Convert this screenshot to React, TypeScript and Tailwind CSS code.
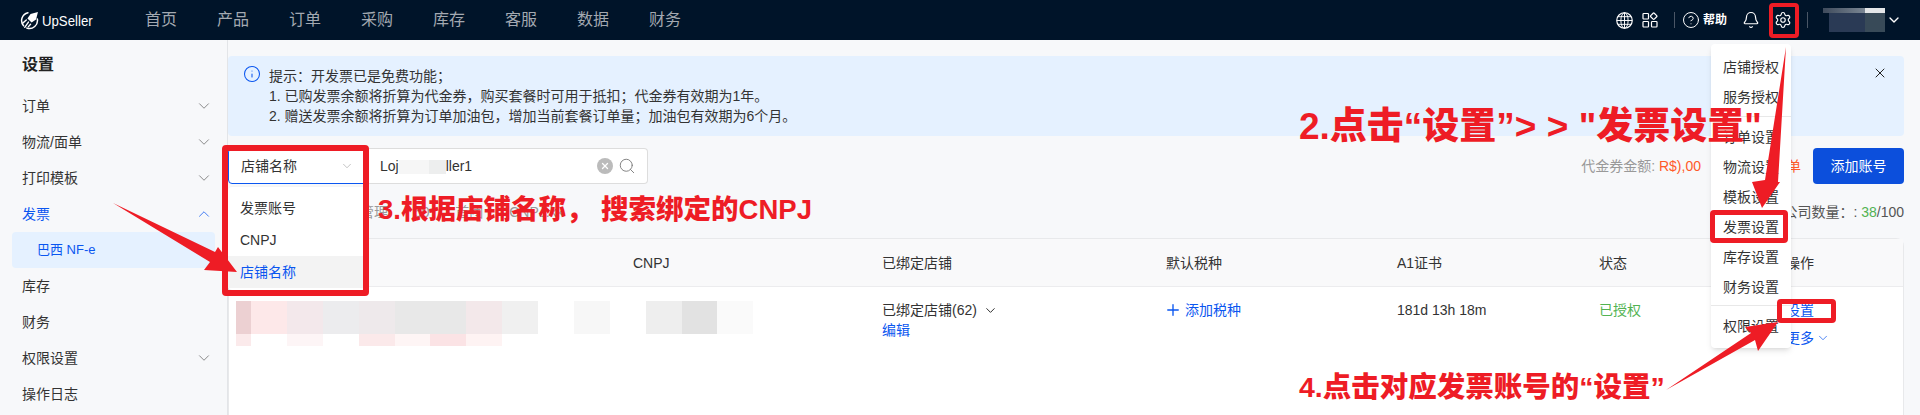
import { Bell, ChevronDown, ChevronUp, CircleHelp, Info, Plus, Search, Settings, X } from 'lucide-react'

const navItems = ['首页', '产品', '订单', '采购', '库存', '客服', '数据', '财务']

const sideItems = [
  { label: '订单', arrow: true },
  { label: '物流/面单', arrow: true },
  { label: '打印模板', arrow: true },
  { label: '发票', open: true },
  { label: '巴西 NF-e', sub: true },
  { label: '库存' },
  { label: '财务' },
  { label: '权限设置', arrow: true },
  { label: '操作日志' },
]

const mosaicTop = [
  ['w-[15px]', 'bg-[#ecd0d2]'],
  ['w-[36px]', 'bg-[#fde8e9]'],
  ['w-[36px]', 'bg-[#f3e8eb]'],
  ['w-[36px]', 'bg-[#ececee]'],
  ['w-[36px]', 'bg-[#eee9eb]'],
  ['w-[35px]', 'bg-[#e8e8e8]'],
  ['w-[36px]', 'bg-[#e8e8e8]'],
  ['w-[36px]', 'bg-[#f3e8ea]'],
  ['w-[36px]', 'bg-[#f0f0f0]'],
  ['w-[36px]', 'bg-white'],
  ['w-[36px]', 'bg-[#f7f7f7]'],
]

const mosaicBottom = [
  ['w-[15px]', 'bg-[#fbeaeb]'],
  ['w-[36px]', 'bg-white'],
  ['w-[36px]', 'bg-[#fdf5f6]'],
  ['w-[36px]', 'bg-white'],
  ['w-[36px]', 'bg-[#fbe9ea]'],
  ['w-[35px]', 'bg-[#fef5f5]'],
  ['w-[36px]', 'bg-[#fbe3e5]'],
  ['w-[36px]', 'bg-[#fef3f3]'],
]

function Logo() {
  return (
    <svg width="19" height="19" viewBox="0 0 18 18" fill="none" className="shrink-0">
      <path d="M7.5 1.6A7.6 7.6 0 0 0 3.4 14" stroke="white" strokeWidth="1.4" strokeLinecap="round" />
      <path d="M16.4 7.5A7.6 7.6 0 0 1 6.5 16.2" stroke="white" strokeWidth="1.4" strokeLinecap="round" />
      <path d="M17 1 10 2.8 7 7l4 4 4.2-3z" fill="white" />
      <path d="M6 8.5 2.6 11.5M8 10.5l-3.5 5M10 12.5 7.8 15" stroke="white" strokeWidth="1.3" strokeLinecap="round" />
    </svg>
  )
}

function GlobeIcon() {
  return (
    <svg width="17" height="17" viewBox="0 0 16 16" fill="none" stroke="white" strokeWidth="0.9" className="shrink-0">
      <circle cx="8" cy="8" r="7.3" strokeWidth="1.1" />
      <ellipse cx="8" cy="8" rx="3.4" ry="7.3" />
      <path d="M8 .7v14.6M.9 8h14.2M1.8 4.4h12.4M1.8 11.6h12.4" />
    </svg>
  )
}

function AppsIcon() {
  return (
    <svg width="16" height="16" viewBox="0 0 16 16" fill="none" stroke="white" strokeWidth="1.2" className="shrink-0">
      <rect x="1" y="1.5" width="5.5" height="5.5" rx="0.8" />
      <rect x="1" y="9.5" width="5.5" height="5.5" rx="0.8" />
      <rect x="9.5" y="9.5" width="5.5" height="5.5" rx="0.8" />
      <rect x="9.2" y="1.7" width="5" height="5" rx="0.8" transform="rotate(45 11.7 4.2)" />
    </svg>
  )
}

function TopBar() {
  return (
    <div className="h-10 bg-[#001429] flex items-center pl-5 pr-[18px] shrink-0">
      <div className="flex items-center gap-[3px] w-[125px]">
        <Logo />
        <span className="text-[15px] leading-none text-white origin-left scale-x-[.88]">UpSeller</span>
      </div>
      <div className="flex items-center gap-10">
        {navItems.map((item) => (
          <span key={item} className="text-base text-[#a3a9b1]">{item}</span>
        ))}
      </div>
      <div className="ml-auto flex items-center text-white">
        <GlobeIcon />
        <div className="ml-[9px]"><AppsIcon /></div>
        <div className="w-px h-4 bg-[#4a5666] ml-[16px]" />
        <CircleHelp size={18} strokeWidth={1.3} className="ml-[7px]" />
        <span className="ml-[3px] text-xs font-bold">帮助</span>
        <Bell size={18} strokeWidth={1.6} className="ml-[15px]" />
        <Settings size={18} strokeWidth={1.5} className="ml-[14px]" />
        <div className="w-px h-4 bg-[#4a5666] ml-[15px]" />
        <div className="ml-[15px] w-[62px] h-6 flex flex-col">
          <div className="h-[5px] flex">
            <div className="w-[42px] bg-gradient-to-r from-[#3f4b5c] to-[#7b8794]" />
            <div className="w-[20px] bg-[#e4e6e8]" />
          </div>
          <div className="flex-1 flex ml-[6px]">
            <div className="w-[36px] bg-[#2a3a55]" />
            <div className="w-[20px] bg-[#384a58]" />
          </div>
        </div>
        <ChevronDown size={16} strokeWidth={2} className="ml-[1px]" />
      </div>
    </div>
  )
}

function Sidebar() {
  return (
    <div className="w-[228px] bg-[#f7f8fa] border-r border-[#e3e5e8] shrink-0">
      <div className="h-12 pl-[22px] pt-[2px] flex items-center text-base font-bold text-[#222]">设置</div>
      {sideItems.map((item) =>
        item.sub ? (
          <div key={item.label} className="mx-3 h-9 rounded bg-[#e5f1ff] pl-[25px] flex items-center text-[13px] text-[#0a56f0]">
            {item.label}
          </div>
        ) : (
          <div
            key={item.label}
            className={`h-9 pl-[22px] pr-[14px] flex items-center ${item.open ? 'text-[#0a56f0]' : 'text-[#333]'}`}
          >
            {item.label}
            {item.arrow && <ChevronDown size={18} strokeWidth={1} className="ml-auto text-[#666]" />}
            {item.open && <ChevronUp size={18} strokeWidth={1} className="ml-auto text-[#0a56f0]" />}
          </div>
        )
      )}
    </div>
  )
}

function Notice() {
  return (
    <div className="h-20 bg-[#e5f1ff] rounded flex pl-[15px] pr-4 pt-[10px]">
      <Info size={18} strokeWidth={1.4} className="text-[#0a56f0] mt-[-1px] shrink-0" />
      <div className="ml-[8px] leading-5 text-[#333]">
        <div>提示：开发票已是免费功能；</div>
        <div>1. 已购发票余额将折算为代金券，购买套餐时可用于抵扣；代金券有效期为1年。</div>
        <div>2. 赠送发票余额将折算为订单加油包，增加当前套餐订单量；加油包有效期为6个月。</div>
      </div>
      <X size={16} strokeWidth={1.5} className="ml-auto mt-[-1px] text-[#222]" />
    </div>
  )
}

function SearchRow() {
  return (
    <div className="mt-3 h-9 flex items-center">
      <div className="w-[140px] h-9 bg-white border border-[#0a56f0] rounded-l flex items-center pl-[12px] pr-[8px] text-[#333]">
        店铺名称
        <ChevronDown size={14} strokeWidth={1} className="ml-auto mr-[5px] text-[#999]" />
      </div>
      <div className="w-[280px] h-9 bg-white border border-l-0 border-[#ddd] rounded-r flex items-center pl-[12px] pr-[12px] text-[#333]">
        Loj
        <div className="w-[47px] h-[14px] flex mt-[1px]">
          <div className="w-[30px] bg-[#f6f6f6]" />
          <div className="w-[17px] bg-[#edeeee]" />
        </div>
        ller1
        <div className="ml-auto w-4 h-4 rounded-full bg-[#bbb] flex items-center justify-center">
          <X size={10} strokeWidth={3} className="text-white" />
        </div>
        <Search size={18} strokeWidth={1.2} className="ml-[5px] mr-[-1px] text-[#777]" />
      </div>
      <div className="ml-auto text-[#999]">代金券金额: <span className="text-[#ff5a2a]">R$),00</span></div>
      <div className="ml-[86px] text-[#ff5a2a] mr-[12px]">单</div>
      <button className="w-[91px] h-9 rounded bg-[#0c4fdc] text-white">添加账号</button>
    </div>
  )
}

function TableBlock() {
  const headers = [
    ['', 'w-[397px]'],
    ['CNPJ', 'w-[249px]'],
    ['已绑定店铺', 'w-[284px]'],
    ['默认税种', 'w-[231px]'],
    ['A1证书', 'w-[202px]'],
    ['状态', 'w-[187px]'],
    ['操作', 'flex-1'],
  ]
  return (
    <div className="flex-1 bg-white border border-[#e8e9eb] border-b-0 rounded-tr-lg">
      <div className="h-[48px] bg-[#f9f9fa] border-b border-[#ececee] flex items-center pl-[7px] text-[#333]">
        {headers.map(([label, width]) => (
          <div key={label || 'first'} className={width}>{label}</div>
        ))}
      </div>
      <div className="flex pl-[7px] pt-[13px] text-[#333] leading-5">
        <div className="w-[397px] pt-[1px]">
          <div className="flex h-[33px]">
            {mosaicTop.map(([w, bg], i) => <div key={i} className={`${w} ${bg}`} />)}
          </div>
          <div className="flex h-3">
            {mosaicBottom.map(([w, bg], i) => <div key={i} className={`${w} ${bg}`} />)}
          </div>
        </div>
        <div className="w-[249px] pt-[1px]">
          <div className="flex h-[33px] ml-[13px]">
            <div className="w-[36px] bg-[#eeeeee]" />
            <div className="w-[35px] bg-[#e2e2e2]" />
            <div className="w-[36px] bg-[#fafafa]" />
          </div>
        </div>
        <div className="w-[284px]">
          <div className="flex items-center">
            已绑定店铺(62)
            <ChevronDown size={15} strokeWidth={1.5} className="ml-[6px] text-[#222]" />
          </div>
          <div className="text-[#0a56f0]">编辑</div>
        </div>
        <div className="w-[231px] flex items-start text-[#0a56f0]">
          <Plus size={18} strokeWidth={1.8} className="mt-[1px] ml-[-2px]" />
          <span className="ml-[3px]">添加税种</span>
        </div>
        <div className="w-[202px]">181d 13h 18m</div>
        <div className="w-[187px] text-[#52b352]">已授权</div>
        <div className="flex-1 text-[#0a56f0]">
          <div>设置</div>
          <div className="mt-2 flex items-center">
            更多
            <ChevronDown size={14} strokeWidth={1.2} className="ml-[2px]" />
          </div>
        </div>
      </div>
    </div>
  )
}

function SelectMenu() {
  return (
    <div className="absolute left-[228px] top-[187px] w-[138px] bg-white rounded pt-[5px] pb-[2px] text-[#333] shadow-sm">
      <div className="h-8 pl-3 flex items-center">发票账号</div>
      <div className="h-8 pl-3 flex items-center">CNPJ</div>
      <div className="h-8 pl-3 flex items-center bg-[#f3f3f3] text-[#0a56f0]">店铺名称</div>
    </div>
  )
}

function SettingsMenu() {
  const item = 'h-[30px] pl-3 flex items-center'
  return (
    <div className="absolute left-[1711px] top-[44px] w-[80px] h-[304px] bg-white rounded shadow-md pt-2 text-[#333]">
      <div className={item}>店铺授权</div>
      <div className={item}>服务授权</div>
      <div className="h-px bg-[#e8e8e8] mt-[4px] mb-[5px]" />
      <div className={item}>订单设置</div>
      <div className={item}>物流设置</div>
      <div className={item}>模板设置</div>
      <div className={item}>发票设置</div>
      <div className={item}>库存设置</div>
      <div className={item}>财务设置</div>
      <div className="h-px bg-[#e8e8e8] mt-[3px] mb-[5px]" />
      <div className={item}>权限设置</div>
    </div>
  )
}

function Annotations() {
  const red = '#ee1c25'
  const label = 'absolute whitespace-nowrap font-black text-[#ee1c25] leading-none'
  return (
    <>
      <div className="absolute left-[1769px] top-[3px] w-[30px] h-[35px] border-4 border-[#ee1c25] rounded-sm" />
      <div className="absolute left-[222px] top-[145px] w-[147px] h-[151px] border-[6px] border-[#ee1c25] rounded-sm" />
      <div className="absolute left-[1710px] top-[210px] w-[78px] h-[33px] border-[5px] border-[#ee1c25] rounded-sm" />
      <div className="absolute left-[1777px] top-[299px] w-[59px] h-[24px] border-[5px] border-[#ee1c25] rounded-sm" />
      <svg className="absolute left-0 top-0 pointer-events-none" width="1920" height="415" viewBox="0 0 1920 415">
        <polygon points="113,203 215,252 218,247 237,272 204,270 210,262" fill={red} />
        <polygon points="1786,47 1778,182 1780,182 1762,208 1752,182 1765,180" fill={red} />
        <polygon points="1666,390 1751,333 1745,327 1778,322 1758,351 1755,340" fill={red} />
      </svg>
      <span className={`${label} left-[1299px] top-[108px] text-[37px]`}>2.点击“设置”&gt; &gt; "发票设置"</span>
      <span className={`${label} left-[378px] top-[196px] text-[27.5px]`}>3.根据店铺名称， 搜索绑定的CNPJ</span>
      <span className={`${label} left-[1299px] top-[373px] text-[28.5px]`}>4.点击对应发票账号的“设置”</span>
    </>
  )
}

export default function App() {
  return (
    <div
      className="relative h-[415px] overflow-hidden flex flex-col bg-[#f7f8fa] text-sm"
      style={{ fontFamily: '"Liberation Sans", "Noto Sans CJK SC", sans-serif' }}
    >
      <TopBar />
      <div className="flex-1 flex min-h-0">
        <Sidebar />
        <div className="flex-1 min-w-0 pt-4 pr-4 flex flex-col">
          <Notice />
          <SearchRow />
          <div className="h-[54px] flex items-center pt-[2px]">
            <span className="ml-[132px] text-[#999] [word-spacing:22px]">管理 50 首团 CNPJ:kk</span>
            <span className="ml-auto text-[#555]">公司数量：: <span className="text-[#52b352]">38</span>/100</span>
          </div>
          <TableBlock />
        </div>
      </div>
      <SelectMenu />
      <SettingsMenu />
      <Annotations />
    </div>
  )
}
